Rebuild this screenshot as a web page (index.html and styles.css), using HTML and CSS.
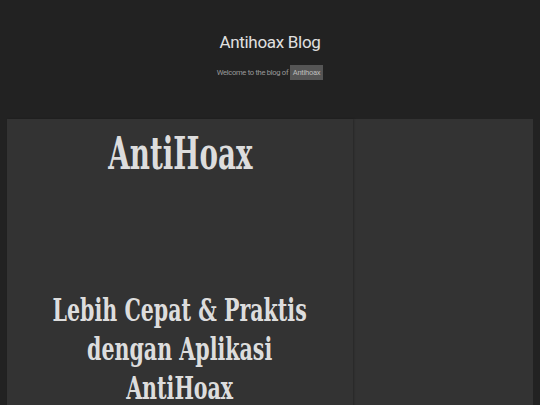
FILE: index.html
```html
<!DOCTYPE html>
<html>
<head>
<meta charset="utf-8">
<link rel="stylesheet" href="styles.css">
</head>
<body>
<header class="site-header">
  <h1 class="site-title">Antihoax Blog</h1>
  <p class="site-desc">Welcome to the blog of <span class="tag">Antihoax</span></p>
</header>
<div class="layout">
  <main class="content">
    <h2 class="brand"><span class="narrow brand-text">AntiHoax</span></h2>
    <h2 class="promo"><span class="narrow promo-text">Lebih Cepat &amp; Praktis<br>dengan Aplikasi<br>AntiHoax</span></h2>
  </main>
  <aside class="sidebar"></aside>
</div>
</body>
</html>
```
FILE: styles.css
```css
html, body { margin: 0; padding: 0; }
body {
  background: #222222;
  color: #dddddd;
  font-family: "Roboto", sans-serif;
  height: 405px;
  overflow: hidden;
}
.site-header {
  text-align: center;
  padding-top: 31px;
  height: 89px;
  box-sizing: border-box;
}
.site-title {
  margin: 0;
  font-family: "Roboto", sans-serif;
  font-weight: 400;
  font-size: 17px;
  line-height: 22px;
  color: #e0e0e0;
  letter-spacing: -0.3px;
}
.site-desc {
  margin: 14px 0 0;
  font-size: 7.6px;
  line-height: 12px;
  color: #9a9a9a;
  letter-spacing: -0.3px;
}
.tag {
  background: #555555;
  color: #bbbbbb;
  padding: 3px 3px;
}
.layout {
  display: flex;
  margin: 30px 7px 0;
  height: 300px;
  background: #333333;
}
.content {
  width: 346px;
  background: #333333;
  text-align: center;
  box-shadow: 1px 0 2px rgba(0,0,0,0.25);
  position: relative;
  z-index: 1;
}
.sidebar {
  flex: 1;
  background: #333333;
}
.brand, .promo {
  display: flex;
  justify-content: center;
  font-family: "DejaVu Serif", serif;
  font-weight: 700;
  color: #dddddd;
  margin: 0;
  white-space: nowrap;
}
.narrow {
  display: block;
  flex: none;
  text-align: center;
}
.brand-text { transform: scaleX(0.63); }
.promo-text { transform: scaleX(0.653); }
.brand {
  font-size: 44px;
  line-height: 50px;
  padding-top: 10px;
}
.promo {
  font-size: 31.5px;
  line-height: 39px;
  margin-top: 111px;
}
```
